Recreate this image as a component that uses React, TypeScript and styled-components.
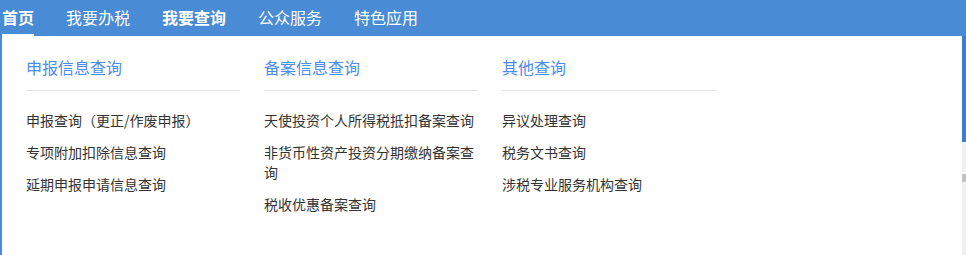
import React from "react";
import styled, { createGlobalStyle } from "styled-components";

const Global = createGlobalStyle`
  html, body { margin: 0; padding: 0; background: #ffffff; }
  body { font-family: "Microsoft YaHei", "Noto Sans CJK SC", "Noto Sans", sans-serif; }
  * { box-sizing: border-box; }
`;

const Page = styled.div`
  width: 966px;
  height: 255px;
  overflow: hidden;
  display: flex;
  flex-direction: column;
`;

const NavBar = styled.nav`
  height: 36px;
  background: #4a8bd5;
  display: flex;
  align-items: flex-start;
  gap: 32px;
  padding-left: 2px;
`;

const NavItem = styled.a<{ $bold?: boolean; $active?: boolean }>`
  height: 36px;
  line-height: 34px;
  font-size: 16px;
  color: #ffffff;
  font-weight: ${(p) => (p.$bold ? 700 : 400)};
  text-decoration: none;
  white-space: nowrap;
  border-bottom: 2px solid ${(p) => (p.$active ? "#ffffff" : "transparent")};
`;

const Body = styled.div`
  flex: 1;
  display: flex;
`;

const LeftEdge = styled.div`
  width: 2px;
  background: #4a8bd5;
`;

const Panel = styled.div`
  flex: 1;
  background: #ffffff;
  display: flex;
  gap: 24px;
  padding: 19px 0 0 24px;
`;

const RightEdge = styled.div`
  width: 4px;
  display: flex;
  flex-direction: column;
  background: #f1f1f1;
`;

const EdgeBlue = styled.div`
  height: 106px;
  background: #3b7fd1;
`;

const EdgeThumb = styled.div`
  margin-top: 30px;
  height: 10px;
  background: #c1c1c1;
  border-top: 2px solid #ffffff;
`;

const Column = styled.section`
  width: 214px;
  display: flex;
  flex-direction: column;
`;

const Heading = styled.h3`
  margin: 0;
  font-size: 16px;
  line-height: 24px;
  font-weight: 400;
  color: #4b8df0;
  padding-bottom: 11px;
  border-bottom: 1px solid #e3e4e6;
`;

const List = styled.ul`
  list-style: none;
  margin: 19px 0 0;
  padding: 0;
  display: flex;
  flex-direction: column;
  gap: 12px;
`;

const Item = styled.li`
  font-size: 14px;
  line-height: 20px;
  color: #333333;
`;

const columns = [
  {
    title: "申报信息查询",
    items: ["申报查询（更正/作废申报）", "专项附加扣除信息查询", "延期申报申请信息查询"],
  },
  {
    title: "备案信息查询",
    items: [
      "天使投资个人所得税抵扣备案查询",
      "非货币性资产投资分期缴纳备案查询",
      "税收优惠备案查询",
    ],
  },
  {
    title: "其他查询",
    items: ["异议处理查询", "税务文书查询", "涉税专业服务机构查询"],
  },
];

export default function App() {
  return (
    <>
      <Global />
      <Page>
        <NavBar>
          <NavItem $bold $active>首页</NavItem>
          <NavItem>我要办税</NavItem>
          <NavItem $bold>我要查询</NavItem>
          <NavItem>公众服务</NavItem>
          <NavItem>特色应用</NavItem>
        </NavBar>
        <Body>
          <LeftEdge />
          <Panel>
            {columns.map((c) => (
              <Column key={c.title}>
                <Heading>{c.title}</Heading>
                <List>
                  {c.items.map((it) => (
                    <Item key={it}>{it}</Item>
                  ))}
                </List>
              </Column>
            ))}
          </Panel>
          <RightEdge>
            <EdgeBlue />
            <EdgeThumb />
          </RightEdge>
        </Body>
      </Page>
    </>
  );
}
